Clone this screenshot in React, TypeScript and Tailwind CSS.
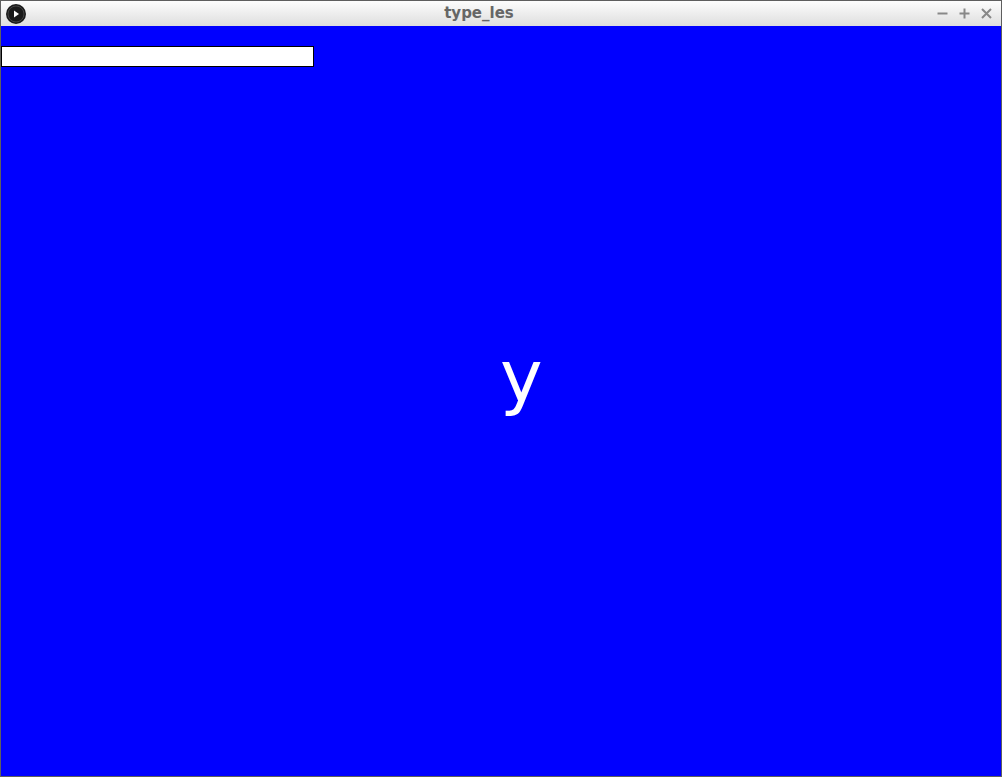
export default function App() {
  return (
    <div className="w-[1002px] h-[777px] border border-[#5e5e5e] bg-white flex flex-col overflow-hidden">
      {/* Title bar */}
      <div className="h-[25px] shrink-0 bg-gradient-to-b from-[#fdfdfd] to-[#dedede] flex items-center relative">
        <div className="ml-[5px] w-[20px] h-[20px] rounded-full bg-[#1a1a1a] flex items-center justify-center">
          <svg width="20" height="20" viewBox="0 0 20 20">
            <circle cx="10" cy="10" r="8" fill="none" stroke="#444" strokeWidth="1" />
            <path d="M8 6.5 L13 10 L8 13.5 Z" fill="#ffffff" />
          </svg>
        </div>
        <div className="absolute inset-0 flex items-center justify-center pointer-events-none">
          <span className="text-[15px] font-bold text-[#666666] ml-[-44px]" style={{ fontFamily: '"DejaVu Sans", sans-serif' }}>
            type_les
          </span>
        </div>
        <div className="ml-auto mr-[9px] flex items-center gap-[11px]">
          <svg width="11" height="11" viewBox="0 0 11 11">
            <path d="M0.5 5.5 H10.5" stroke="#888" strokeWidth="2" />
          </svg>
          <svg width="11" height="11" viewBox="0 0 11 11">
            <path d="M0.5 5.5 H10.5 M5.5 0.5 V10.5" stroke="#888" strokeWidth="2" />
          </svg>
          <svg width="11" height="11" viewBox="0 0 11 11">
            <path d="M1 1 L10 10 M10 1 L1 10" stroke="#888" strokeWidth="2" />
          </svg>
        </div>
      </div>

      {/* Sketch canvas */}
      <div className="relative flex-1 bg-[#0000ff]">
        <div className="pt-[20px]">
          <div className="w-[313px] h-[21px] bg-white border border-black" />
        </div>
        <span
          className="absolute left-[499px] top-[314px] text-white text-[72px] leading-none"
          style={{ fontFamily: '"DejaVu Sans", sans-serif' }}
        >
          y
        </span>
      </div>
    </div>
  );
}
